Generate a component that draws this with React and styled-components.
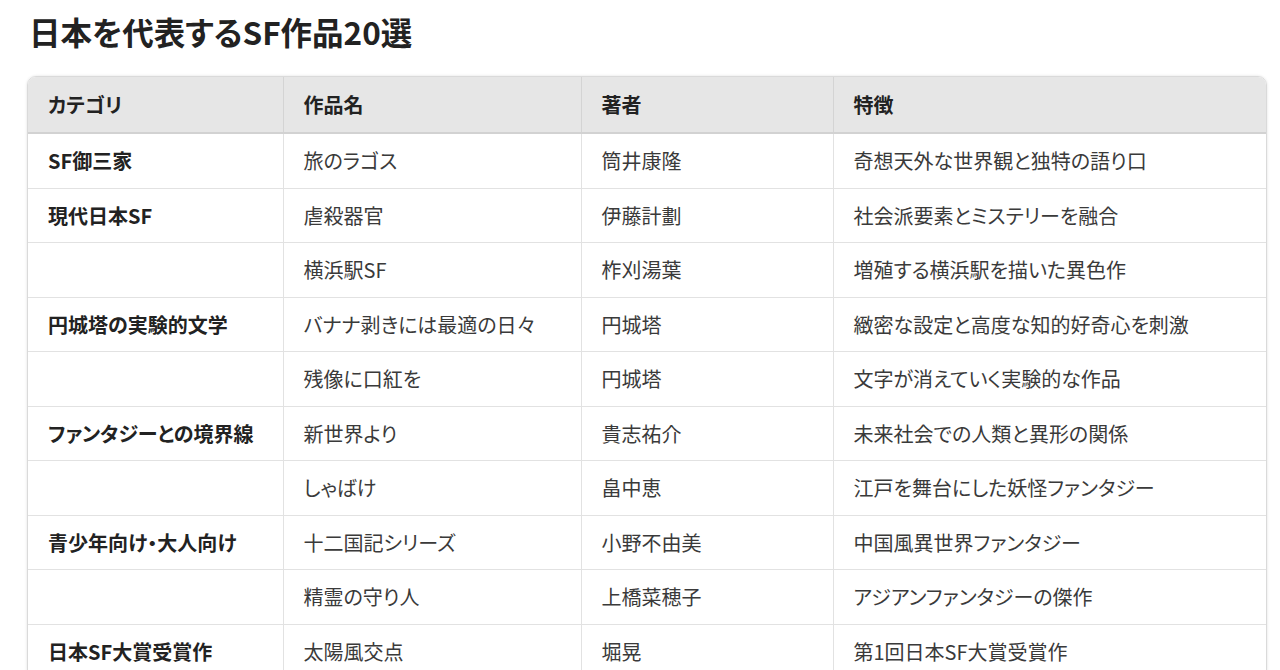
import React from "react";
import styled, { createGlobalStyle } from "styled-components";

const GlobalStyle = createGlobalStyle`
  html, body { margin: 0; padding: 0; background: #ffffff; }
  body {
    font-family: "Noto Sans CJK JP", "Noto Sans", sans-serif;
    font-feature-settings: "palt";
    color: #333;
  }
`;

const Page = styled.div`
  padding: 10px 15px 0 27px;
`;

const Title = styled.h1`
  margin: 0 0 23px 2px;
  font-size: 31.5px;
  font-weight: 700;
  color: #222;
  line-height: 43px;
  letter-spacing: 0;
`;

const TableWrap = styled.div`
  width: 1238px;
  border: 1px solid #dadada;
  border-radius: 9px;
  overflow: hidden;
  box-shadow: 0 0 3px rgba(0, 0, 0, 0.12);
`;

const Table = styled.table`
  width: 100%;
  border-collapse: collapse;
  table-layout: fixed;
`;

const Th = styled.th`
  background: #e6e6e6;
  height: 55px;
  padding: 0 20px;
  text-align: left;
  font-size: 20px;
  font-weight: 700;
  color: #222;
  border-bottom: 2px solid #d2d2d2;
  border-left: 1px solid #d4d4d4;
  &:first-child { border-left: none; }
`;

const Td = styled.td`
  height: 53.5px;
  padding: 0 20px;
  font-size: 20px;
  font-weight: ${(p) => (p.$bold ? 700 : 400)};
  color: ${(p) => (p.$bold ? "#222" : "#3a3a3a")};
  border-top: 1px solid #e2e2e2;
  border-left: 1px solid #e2e2e2;
  white-space: nowrap;
  &:first-child { border-left: none; }
`;

const Row = styled.tr`
  &:first-child td { border-top: none; }
`;

const columns = [
  { label: "カテゴリ", width: 255 },
  { label: "作品名", width: 298 },
  { label: "著者", width: 252 },
  { label: "特徴", width: 433 },
];

const rows = [
  ["SF御三家", "旅のラゴス", "筒井康隆", "奇想天外な世界観と独特の語り口"],
  ["現代日本SF", "虐殺器官", "伊藤計劃", "社会派要素とミステリーを融合"],
  ["", "横浜駅SF", "柞刈湯葉", "増殖する横浜駅を描いた異色作"],
  ["円城塔の実験的文学", "バナナ剥きには最適の日々", "円城塔", "緻密な設定と高度な知的好奇心を刺激"],
  ["", "残像に口紅を", "円城塔", "文字が消えていく実験的な作品"],
  ["ファンタジーとの境界線", "新世界より", "貴志祐介", "未来社会での人類と異形の関係"],
  ["", "しゃばけ", "畠中恵", "江戸を舞台にした妖怪ファンタジー"],
  ["青少年向け・大人向け", "十二国記シリーズ", "小野不由美", "中国風異世界ファンタジー"],
  ["", "精霊の守り人", "上橋菜穂子", "アジアンファンタジーの傑作"],
  ["日本SF大賞受賞作", "太陽風交点", "堀晃", "第1回日本SF大賞受賞作"],
];

export default function App() {
  return (
    <>
      <GlobalStyle />
      <Page>
        <Title>日本を代表するSF作品20選</Title>
        <TableWrap>
          <Table>
            <colgroup>
              {columns.map((c) => (
                <col key={c.label} style={{ width: c.width }} />
              ))}
            </colgroup>
            <thead>
              <tr>
                {columns.map((c) => (
                  <Th key={c.label}>{c.label}</Th>
                ))}
              </tr>
            </thead>
            <tbody>
              {rows.map((r, i) => (
                <Row key={i}>
                  {r.map((cell, j) => (
                    <Td key={j} $bold={j === 0}>
                      {cell}
                    </Td>
                  ))}
                </Row>
              ))}
            </tbody>
          </Table>
        </TableWrap>
      </Page>
    </>
  );
}
